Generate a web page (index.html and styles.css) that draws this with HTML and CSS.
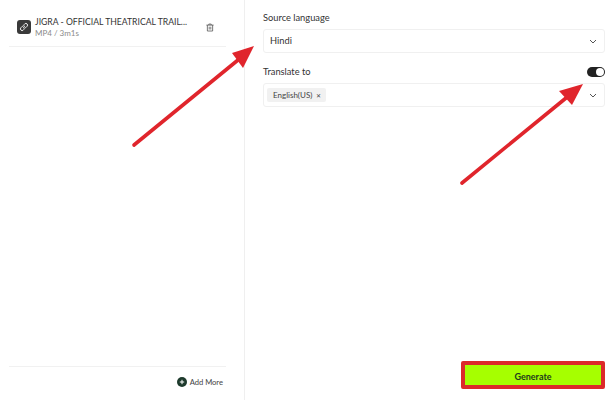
FILE: index.html
```html
<!DOCTYPE html>
<html lang="en">
<head>
<meta charset="utf-8">
<title>Translate</title>
<link rel="stylesheet" href="styles.css">
</head>
<body>
<div class="app">
  <aside class="files">
    <div class="file-list">
      <div class="file">
        <span class="file-icon">
          <svg viewBox="0 0 14 14" width="10" height="10" fill="none" stroke="#fff" stroke-width="1.3" stroke-linecap="round">
            <path d="M6 8a2.3 2.3 0 0 0 3.3 0l2-2A2.3 2.3 0 0 0 8 2.7l-.8.8"/>
            <path d="M8 6a2.3 2.3 0 0 0-3.3 0l-2 2A2.3 2.3 0 0 0 6 11.3l.8-.8"/>
          </svg>
        </span>
        <div class="file-text">
          <div class="file-name">JIGRA - OFFICIAL THEATRICAL TRAIL...</div>
          <div class="file-meta">MP4 / 3m1s</div>
        </div>
        <svg class="trash" viewBox="0 0 10 10" width="8" height="9" fill="none" stroke="#555" stroke-width="1">
          <path d="M.5 2h9M3.5 2V.7h3V2M1.7 2v7.4h6.6V2M4 4v3.5M6 4v3.5"/>
        </svg>
      </div>
    </div>
    <div class="files-foot">
      <span class="add-more">
        <svg viewBox="0 0 10 10" width="10" height="10">
          <circle cx="5" cy="5" r="5" fill="#1d3a2c"/>
          <path d="M5 2.8v4.4M2.8 5h4.4" stroke="#fff" stroke-width="1"/>
        </svg>
        Add More
      </span>
    </div>
  </aside>
  <main class="settings">
    <div class="label-row"><span class="label">Source language</span></div>
    <div class="select">
      <span class="select-value">Hindi</span>
      <svg class="chev" viewBox="0 0 8 5" width="8" height="5" fill="none" stroke="#555" stroke-width="1"><path d="M1 1l3 3 3-3"/></svg>
    </div>
    <div class="label-row translate-row">
      <span class="label">Translate to</span>
      <span class="toggle"><span class="knob"></span></span>
    </div>
    <div class="select select-multi">
      <span class="chip">English(US) <span class="chip-x">✕</span></span>
      <svg class="chev" viewBox="0 0 8 5" width="8" height="5" fill="none" stroke="#555" stroke-width="1"><path d="M1 1l3 3 3-3"/></svg>
    </div>
    <div class="actions">
      <button class="generate" type="button">Generate</button>
    </div>
  </main>
</div>
<svg class="arrows" viewBox="0 0 616 400" width="616" height="400" aria-hidden="true">
  <g stroke="#e0252c" stroke-width="3.6" stroke-linecap="round" fill="none">
    <path d="M134 145L238 60"/>
    <path d="M462 183L566 98"/>
  </g>
  <path d="M254 46L232 53 243 68Z" fill="#e0252c"/>
  <path d="M583 84L559 91 572 105Z" fill="#e0252c"/>
</svg>
</body>
</html>
```

FILE: styles.css
```css
* { box-sizing: border-box; }
html, body { margin: 0; padding: 0; }
body {
  width: 616px;
  height: 400px;
  background: #fff;
  color: #2b2b2b;
  font-family: Lato, "Noto Sans", sans-serif;
  overflow: hidden;
  position: relative;
}
.app { display: flex; height: 400px; }
.files {
  width: 245px;
  flex: none;
  border-right: 1px solid #efefef;
  display: flex;
  flex-direction: column;
  padding: 0 18px 0 9px;
}
.file-list { flex: 1; }
.file {
  height: 47px;
  padding: 8px 0 0 8px;
  border-bottom: 1px solid #f1f1f1;
  display: flex;
  align-items: center;
}
.file-icon {
  width: 14px;
  height: 14px;
  border-radius: 3px;
  background: #3a3a3a;
  display: flex;
  align-items: center;
  justify-content: center;
  flex: none;
}
.file-text { margin-left: 4px; width: 158px; flex: none; }
.file-name { font-size: 8.65px; line-height: 12px; color: #333; white-space: nowrap; }
.file-meta { font-size: 8px; line-height: 10px; color: #8a8a8a; }
.trash { margin-left: 13px; flex: none; }
.files-foot {
  height: 34px;
  border-top: 1px solid #f1f1f1;
  display: flex;
  justify-content: flex-end;
  padding: 9px 3px 0 0;
}
.add-more {
  display: flex;
  align-items: center;
  gap: 3px;
  height: 12px;
  font-size: 7.6px;
  color: #444;
}
.settings {
  flex: 1;
  display: flex;
  flex-direction: column;
  padding: 12px 11px 11px 18px;
}
.label-row {
  display: flex;
  align-items: center;
  justify-content: space-between;
  height: 12px;
  margin-bottom: 5px;
}
.translate-row { margin-top: 13px; }
.label { font-size: 9.3px; color: #333; padding-bottom: 2px; }
.select {
  height: 24px;
  border: 1px solid #f0f0f0;
  border-radius: 3px;
  display: flex;
  align-items: center;
  justify-content: space-between;
  padding: 0 7px 0 6px;
  font-size: 9.3px;
  color: #333;
}
.select-value { padding-bottom: 2px; }
.select-multi { padding-left: 3px; }
.chip {
  display: flex;
  align-items: center;
  gap: 4px;
  height: 14px;
  padding: 0 5px 0 6px;
  background: #f1f1f1;
  border-radius: 2px;
  font-size: 8px;
  color: #444;
}
.chip-x { font-size: 6px; }
.toggle {
  width: 18px;
  height: 10px;
  border-radius: 5px;
  background: #222;
  position: relative;
  display: block;
}
.knob {
  position: absolute;
  right: 1px;
  top: 1px;
  width: 8px;
  height: 8px;
  border-radius: 50%;
  background: #fff;
}
.actions { margin-top: auto; display: flex; justify-content: flex-end; }
.generate {
  width: 144px;
  height: 28px;
  background: #a6ff00;
  border: 4px solid #dc2a2a;
  border-radius: 2px;
  padding: 2px 0 0;
  font-family: inherit;
  font-size: 9px;
  font-weight: 700;
  color: #1d3a1d;
}
.arrows { position: absolute; left: 0; top: 0; pointer-events: none; }
```
